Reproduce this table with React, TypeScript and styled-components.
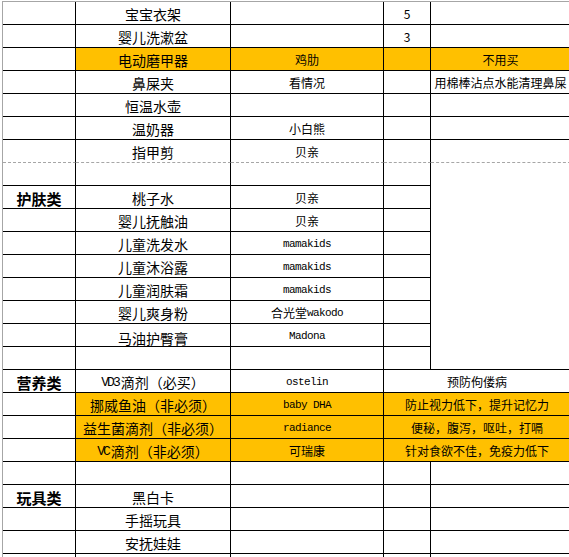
import React from "react";
import styled, { createGlobalStyle, css } from "styled-components";

const ORANGE = "#ffc000";

const GlobalStyle = createGlobalStyle`
  html, body {
    margin: 0;
    padding: 0;
    width: 569px;
    height: 557px;
    overflow: hidden;
    background: #fff;
  }
  body {
    font-family: "Noto Sans CJK SC", "Liberation Sans", sans-serif;
    color: #000;
  }
`;

type Kind = "cat" | "item" | "note";

interface CellData {
  t?: React.ReactNode;
  k?: Kind;
  span?: number;
  rows?: number;
  fill?: boolean;
  dashed?: boolean;
  drop?: boolean;
}

const Sheet = styled.div`
  display: grid;
  grid-template-columns: 73px 155px 153px 47px 140px;
  grid-auto-rows: 23px;
  width: 568px;
  margin: 1px 0 0 2px;
  border-top: 1px solid #a6a6a6;
  border-left: 1px solid #a6a6a6;
`;

const kindStyles = {
  cat: css`
    font-size: 15px;
    font-weight: 700;
  `,
  item: css`
    font-size: 14px;
  `,
  note: css`
    font-size: 12px;
  `,
};

const Cell = styled.div<{
  $kind: Kind;
  $span: number;
  $rows: number;
  $fill: boolean;
  $dashed: boolean;
  $drop: boolean;
}>`
  grid-column: span ${({ $span }) => $span};
  grid-row: span ${({ $rows }) => $rows};
  box-sizing: border-box;
  display: flex;
  align-items: center;
  justify-content: center;
  padding-top: ${({ $drop }) => ($drop ? "5px" : "2px")};
  overflow: hidden;
  white-space: nowrap;
  line-height: 1;
  background: ${({ $fill }) => ($fill ? ORANGE : "transparent")};
  border-right: 1px solid #000;
  border-bottom: ${({ $dashed }) =>
    $dashed ? "1px dashed #a6a6a6" : "1px solid #000"};
  ${({ $kind }) => kindStyles[$kind]}
`;

const Latin = styled.span<{ $tight?: boolean }>`
  font-family: "Liberation Mono", "DejaVu Sans Mono", monospace;
  font-size: ${({ $tight }) => ($tight ? "13px" : "11px")};
  letter-spacing: ${({ $tight }) => ($tight ? "-2px" : "-0.6px")};
  vertical-align: -1px;
  margin-right: ${({ $tight }) => ($tight ? "2px" : "0")};
`;

const E: CellData = {};
const item = (t: React.ReactNode, extra: Partial<CellData> = {}): CellData => ({
  t,
  k: "item",
  ...extra,
});
const note = (t: React.ReactNode, extra: Partial<CellData> = {}): CellData => ({
  t,
  k: "note",
  ...extra,
});
const cat = (t: string): CellData => ({ t, k: "cat" });
const dash: CellData = { dashed: true };
const fill: CellData = { fill: true };

const rows: CellData[][] = [
  [E, item("宝宝衣架"), E, note("5"), E],
  [E, item("婴儿洗漱盆"), E, note("3"), E],
  [E, item("电动磨甲器", fill), note("鸡肋", fill), fill, note("不用买", fill)],
  [E, item("鼻屎夹"), note("看情况"), E, note("用棉棒沾点水能清理鼻屎")],
  [E, item("恒温水壶"), E, E, E],
  [E, item("温奶器"), note("小白熊"), E, E],
  [dash, item("指甲剪", dash), note("贝亲", dash), dash, dash],
  [E, E, E, E, { rows: 9 }],
  [cat("护肤类"), item("桃子水"), note("贝亲"), E],
  [E, item("婴儿抚触油"), note("贝亲"), E],
  [E, item("儿童洗发水"), note(<Latin>mamakids</Latin>), E],
  [E, item("儿童沐浴露"), note(<Latin>mamakids</Latin>), E],
  [E, item("儿童润肤霜"), note(<Latin>mamakids</Latin>), E],
  [E, item("婴儿爽身粉"), note(<>合光堂<Latin>wakodo</Latin></>), E],
  [E, item("马油护臀膏", { drop: true }), note(<Latin>Madona</Latin>), E],
  [E, E, E, E],
  [
    cat("营养类"),
    item(<><Latin $tight>VD3</Latin>滴剂（必买）</>),
    note(<Latin>ostelin</Latin>),
    note("预防佝偻病", { span: 2 }),
  ],
  [
    E,
    item("挪威鱼油（非必须）", fill),
    note(<Latin>baby DHA</Latin>, fill),
    note("防止视力低下，提升记忆力", { span: 2, fill: true }),
  ],
  [
    E,
    item("益生菌滴剂（非必须）", fill),
    note(<Latin>radiance</Latin>, fill),
    note("便秘，腹泻，呕吐，打嗝", { span: 2, fill: true }),
  ],
  [
    E,
    item(<><Latin $tight>VC</Latin>滴剂（非必须）</>, fill),
    note("可瑞康", fill),
    note("针对食欲不佳，免疫力低下", { span: 2, fill: true }),
  ],
  [E, E, E, E, E],
  [cat("玩具类"), item("黑白卡"), E, E, E],
  [E, item("手摇玩具"), E, E, E],
  [E, item("安抚娃娃"), E, E, E],
  [E, E, E, E, E],
];

export default function App() {
  return (
    <>
      <GlobalStyle />
      <Sheet>
        {rows.flatMap((row, r) =>
          row.map((c, i) => (
            <Cell
              key={`${r}-${i}`}
              $kind={c.k ?? "note"}
              $span={c.span ?? 1}
              $rows={c.rows ?? 1}
              $fill={!!c.fill}
              $dashed={!!c.dashed}
              $drop={!!c.drop}
            >
              {c.t}
            </Cell>
          ))
        )}
      </Sheet>
    </>
  );
}
